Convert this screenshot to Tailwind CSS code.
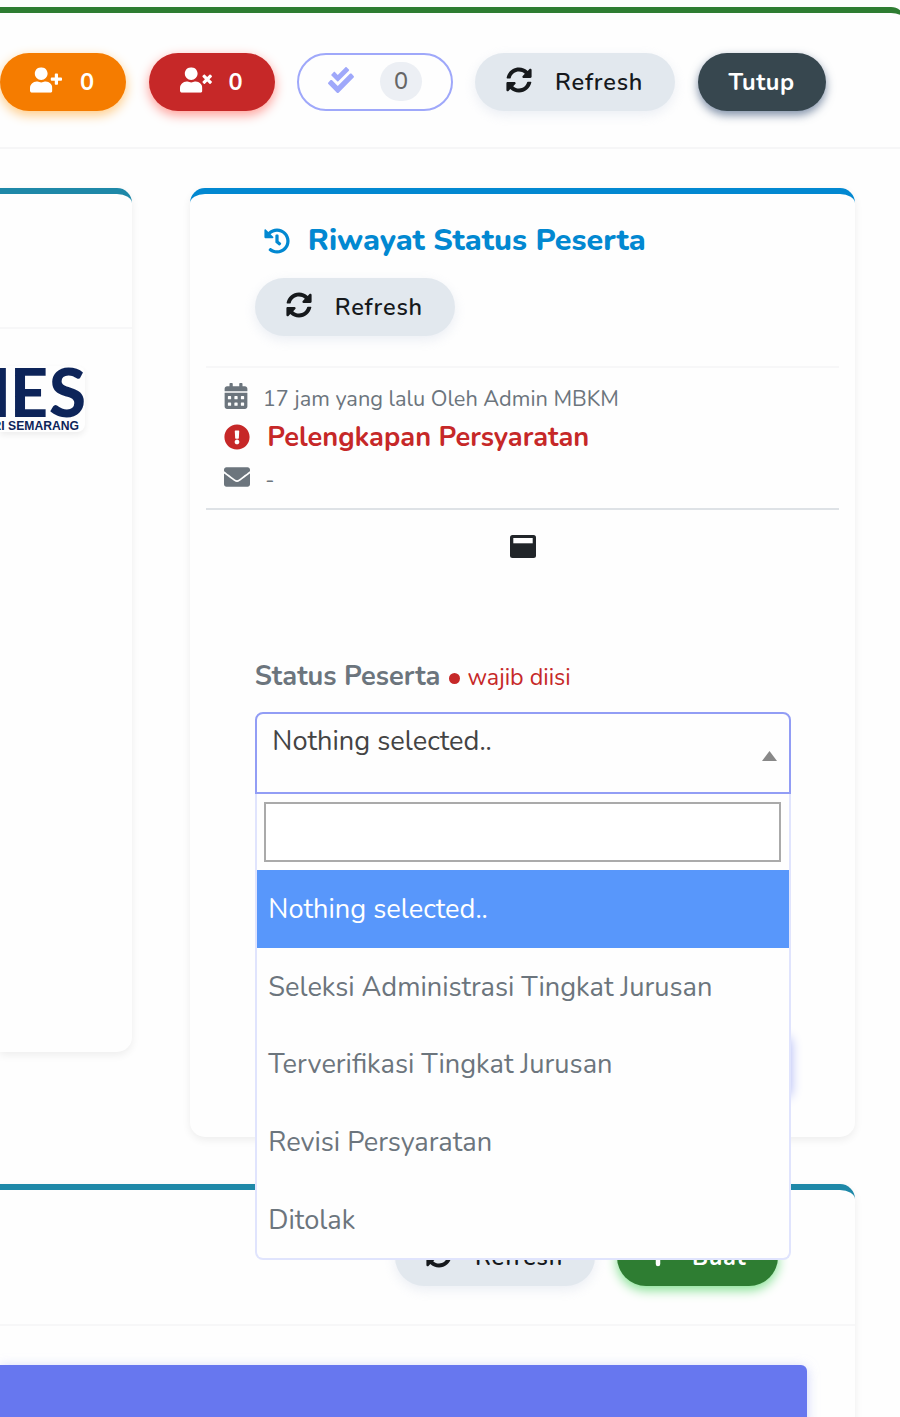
<!DOCTYPE html>
<html lang="id">
<head>
    <meta charset="UTF-8">
    <meta name="viewport" content="width=device-width, initial-scale=1.0">
    <title>Riwayat Status Peserta</title>
    <script src="https://cdn.jsdelivr.net/npm/@tailwindcss/browser@4"></script>
</head>
<body class="w-[900px] h-[1417px] overflow-hidden bg-[#fefefe] pt-[7px] font-[Nunito,Lato,sans-serif] text-[#6c757d]">
    <!-- icons -->
    <svg class="hidden">
        <symbol id="sync" viewBox="0 0 512 512"><path d="M370.72 133.28C339.458 104.008 298.888 87.962 255.848 88c-77.458.068-144.328 53.178-162.791 126.85-1.344 5.363-6.122 9.15-11.651 9.15H24.103c-7.498 0-13.194-6.807-11.807-14.176C33.933 94.924 134.813 8 256 8c66.448 0 126.791 26.136 171.315 68.685L463.03 40.97C478.149 25.851 504 36.559 504 57.941V192c0 13.255-10.745 24-24 24H345.941c-21.382 0-32.09-25.851-16.971-40.971l41.75-41.749zM32 296h134.059c21.382 0 32.09 25.851 16.971 40.971l-41.75 41.75c31.262 29.273 71.835 45.319 114.876 45.28 77.418-.07 144.315-53.144 162.787-126.849 1.344-5.363 6.122-9.15 11.651-9.15h57.304c7.498 0 13.194 6.807 11.807 14.176C478.067 417.076 377.187 504 256 504c-66.448 0-126.791-26.136-171.315-68.685L48.97 471.03C33.851 486.149 8 475.441 8 454.059V320c0-13.255 10.745-24 24-24z"/></symbol>
        <symbol id="user" viewBox="0 0 448 512"><path d="M224 256c70.7 0 128-57.3 128-128S294.7 0 224 0 96 57.3 96 128s57.3 128 128 128zm89.6 32h-16.7c-22.2 10.2-46.9 16-72.9 16s-50.6-5.8-72.9-16h-16.7C60.2 288 0 348.2 0 422.4V464c0 26.5 21.5 48 48 48h352c26.5 0 48-21.5 48-48v-41.6c0-74.2-60.2-134.4-134.4-134.4z"/></symbol>
    </svg>

    <div class="w-[905px] h-[1420px] rounded-tr-[14px] border-t-6 border-[#2e7d32]">
        <div class="flex h-[136px] items-start gap-[22.5px] border-b-2 border-[#f6f6f7] pt-[39.6px] text-[23.5px] leading-[58px] text-white">
            <button class="flex h-[58px] w-[126px] shrink-0 items-center rounded-full bg-[#f57c00] pl-[30px] font-bold shadow-[0_4px_12px_#ffc980]">
                <svg class="mb-1 h-[26px] w-8" viewBox="0 0 640 512" fill="currentColor"><use href="#user" width="448" height="512"/><path d="M624 208h-64v-64c0-8.800-7.200-16-16-16h-32c-8.800 0-16 7.200-16 16v64h-64c-8.800 0-16 7.200-16 16v32c0 8.800 7.200 16 16 16h64v64c0 8.800 7.200 16 16 16h32c8.800 0 16-7.200 16-16v-64h64c8.800 0 16-7.200 16-16v-32c0-8.800-7.200-16-16-16z"/></svg>
                <span class="ml-[18px]">0</span>
            </button>
            <button class="flex h-[58px] w-[126px] shrink-0 items-center rounded-full bg-[#c62828] pl-[31px] font-bold shadow-[0_4px_12px_#ff9a93]">
                <svg class="mb-1 h-[26px] w-8" viewBox="0 0 640 512" fill="currentColor"><use href="#user" width="448" height="512"/><path d="M589.600 240l45.600-45.600c6.300-6.300 6.300-16.500 0-22.800l-22.800-22.800c-6.300-6.300-16.500-6.300-22.800 0L544 194.400l-45.600-45.600c-6.300-6.300-16.500-6.300-22.800 0l-22.800 22.800c-6.300 6.300-6.300 16.500 0 22.800l45.600 45.600-45.600 45.600c-6.300 6.300-6.300 16.500 0 22.800l22.800 22.800c6.300 6.300 16.500 6.300 22.800 0l45.600-45.600 45.600 45.600c6.300 6.300 16.500 6.300 22.800 0l22.800-22.800c6.300-6.300 6.300-16.500 0-22.800L589.600 240z"/></svg>
                <span class="ml-[17px]">0</span>
            </button>
            <button class="flex h-[58px] w-[155.6px] shrink-0 items-center rounded-full border-2 border-[#9fa8fa] pl-[29px] text-[#9fa8fa]">
                <svg class="mb-1 size-[26px]" viewBox="0 0 512 512" fill="currentColor"><path d="M505 174.800l-39.600-39.600c-9.400-9.400-24.600-9.400-33.900 0L192 374.700 80.600 263.200c-9.400-9.400-24.600-9.400-33.900 0L7 302.900c-9.400 9.400-9.400 24.600 0 34L175 505c9.400 9.400 24.600 9.400 33.900 0l296-296.200c9.400-9.500 9.400-24.700.1-34zm-324.300 106c6.200 6.300 16.400 6.300 22.600 0l208-208.200c6.200-6.300 6.200-16.400 0-22.600L366.100 4.700c-6.200-6.300-16.400-6.300-22.600 0L192 156.200l-55.400-55.500c-6.200-6.300-16.400-6.300-22.600 0L68.700 146c-6.200 6.300-6.200 16.400 0 22.600l112 112.200z"/></svg>
                <span class="ml-[26px] h-[39px] w-[42px] rounded-full bg-[#eceff4] text-center font-medium leading-[39px] text-[#666]">0</span>
            </button>
            <button class="flex h-[58px] w-[200px] shrink-0 items-center rounded-full bg-[#e2e8ee] pl-[31px] font-semibold text-[#16191c] shadow-[0_4px_12px_#dfe5ef99]">
                <svg class="mb-1 size-[26px]" fill="currentColor"><use href="#sync"/></svg>
                <span class="ml-[23px] tracking-[0.8px]">Refresh</span>
            </button>
            <button class="h-[58px] w-[128px] shrink-0 rounded-full bg-[#37474f] font-bold tracking-[0.6px] shadow-[0_4px_10px_#5d7290cc]">Tutup</button>
        </div>

        <div class="flex items-start gap-[58.3px] pt-[39px]">
            <div class="h-[864px] w-[132px] rounded-r-[15px] border-t-6 border-[#1e88a8] shadow-[0_3px_8px_#00000012]">
                <div class="h-[135px] border-b-2 border-[#f7f7f8]"></div>
                <!-- logo -->
                <svg class="mt-[37px] h-[66px] w-[85px] rounded-r-lg shadow-[0_3px_6px_#00000012]" viewBox="0 0 85 66" fill="#0d2459" font-family="Lato, sans-serif" font-weight="900">
                    <text x="-41" y="51" font-size="67" textLength="52" lengthAdjust="spacingAndGlyphs">N</text>
                    <text x="10" y="51" font-size="67" textLength="38" lengthAdjust="spacingAndGlyphs">E</text>
                    <text x="49" y="51" font-size="67" textLength="37" lengthAdjust="spacingAndGlyphs">S</text>
                    <text x="-126" y="64" font-size="13.500" font-family="Liberation Sans" font-weight="700" textLength="205" lengthAdjust="spacingAndGlyphs">UNIVERSITAS NEGERI SEMARANG</text>
                </svg>
            </div>

            <div class="relative h-[949px] w-[665px] rounded-[15px] border-t-6 border-[#0288d1] px-4 shadow-[0_3px_8px_#00000012]">
                <div class="h-[174px] border-b-2 border-[#f7f7f8] pl-[48.500px] pt-[26px]">
                    <h4 class="flex h-[42px] items-center pl-[9px] text-[30.4px] font-extrabold text-[#0288d1]">
                        <svg class="size-[26px]" viewBox="0 0 512 512" fill="currentColor"><path d="M504 255.531c.253 136.640-111.180 248.372-247.820 248.468-59.015.042-113.223-20.530-155.822-54.911-11.077-8.940-11.905-25.541-1.839-35.607l11.267-11.267c8.609-8.609 22.353-9.551 31.891-1.984C173.062 425.135 212.781 440 256 440c101.705 0 184-82.311 184-184 0-101.705-82.311-184-184-184-48.814 0-93.149 18.969-126.068 49.932l50.754 50.754c10.080 10.080 2.941 27.314-11.313 27.314H24c-8.837 0-16-7.163-16-16V38.627c0-14.254 17.234-21.393 27.314-11.314l49.372 49.372C129.209 34.136 189.552 8 256 8c136.810 0 247.747 110.780 248 247.531zm-180.912 78.784l9.823-12.630c8.138-10.463 6.253-25.542-4.210-33.679L288 256.349V152c0-13.255-10.745-24-24-24h-16c-13.255 0-24 10.745-24 24v135.651l65.409 50.874c10.463 8.137 25.541 6.253 33.679-4.210z"/></svg>
                        <span class="ml-[18px] whitespace-nowrap">Riwayat Status Peserta</span>
                    </h4>
                    <button class="mt-4 flex h-[58px] w-[200px] items-center rounded-full bg-[#e2e8ee] pl-[31px] text-[23.5px] font-semibold text-[#16191c] shadow-[0_4px_12px_#dfe5ef99]">
                        <svg class="mb-1 size-[26px]" fill="currentColor"><use href="#sync"/></svg>
                        <span class="ml-[23px] mt-px tracking-[0.8px]">Refresh</span>
                    </button>
                </div>

                <div class="h-[142px] border-b-2 border-[#dee2e6] pl-[18px] pt-[10px]">
                    <div class="flex h-10 items-center text-[21.76px]">
                        <svg class="mb-1 h-[26px] w-6" viewBox="0 0 448 512" fill="currentColor"><path d="M0 464c0 26.500 21.500 48 48 48h352c26.500 0 48-21.500 48-48V192H0v272zm320-196c0-6.600 5.400-12 12-12h40c6.600 0 12 5.400 12 12v40c0 6.600-5.400 12-12 12h-40c-6.600 0-12-5.400-12-12v-40zm0 128c0-6.600 5.400-12 12-12h40c6.600 0 12 5.400 12 12v40c0 6.600-5.400 12-12 12h-40c-6.600 0-12-5.400-12-12v-40zM192 268c0-6.600 5.400-12 12-12h40c6.600 0 12 5.400 12 12v40c0 6.600-5.400 12-12 12h-40c-6.600 0-12-5.400-12-12v-40zm0 128c0-6.600 5.400-12 12-12h40c6.600 0 12 5.400 12 12v40c0 6.600-5.400 12-12 12h-40c-6.600 0-12-5.400-12-12v-40zM64 268c0-6.600 5.400-12 12-12h40c6.600 0 12 5.400 12 12v40c0 6.600-5.400 12-12 12H76c-6.600 0-12-5.400-12-12v-40zm0 128c0-6.600 5.400-12 12-12h40c6.600 0 12 5.400 12 12v40c0 6.600-5.400 12-12 12H76c-6.600 0-12-5.400-12-12v-40zM400 64h-48V16c0-8.800-7.200-16-16-16h-32c-8.800 0-16 7.200-16 16v48H160V16c0-8.800-7.200-16-16-16h-32c-8.800 0-16 7.200-16 16v48H48C21.500 64 0 85.500 0 112v48h448v-48c0-26.500-21.500-48-48-48z"/></svg>
                        <span class="ml-[14.5px] mt-0.5">17 jam yang lalu Oleh Admin MBKM</span>
                    </div>
                    <div class="-mt-px flex h-10 items-center text-[27.2px] font-bold text-[#c62828]">
                        <svg class="size-[26px]" viewBox="0 0 512 512" fill="currentColor"><path d="M504 256c0 136.997-111.043 248-248 248S8 392.997 8 256C8 119.083 119.043 8 256 8s248 111.083 248 248zm-248 50c-25.405 0-46 20.595-46 46s20.595 46 46 46 46-20.595 46-46-20.595-46-46-46zm-43.673-165.346l7.418 136c.347 6.364 5.609 11.346 11.982 11.346h48.546c6.373 0 11.635-4.982 11.982-11.346l7.418-136c.375-6.874-5.098-12.654-11.982-12.654h-63.383c-6.884 0-12.356 5.780-11.981 12.654z"/></svg>
                        <span class="ml-[17px] mt-0.5">Pelengkapan Persyaratan</span>
                    </div>
                    <div class="flex h-10 items-center text-[21.76px]">
                        <svg class="size-[26px]" viewBox="0 0 512 512" fill="currentColor"><path d="M502.300 190.800c3.900-3.100 9.700-.2 9.700 4.700V400c0 26.500-21.500 48-48 48H48c-26.500 0-48-21.500-48-48V195.600c0-5 5.700-7.800 9.700-4.700 22.400 17.400 52.100 39.500 154.100 113.600 21.100 15.400 56.700 47.800 92.200 47.600 35.700.3 72-32.800 92.300-47.600 102-74.100 131.600-96.300 154-113.700zM256 320c23.200.4 56.600-29.200 73.400-41.400 132.700-96.300 142.800-104.700 173.400-128.700 5.800-4.500 9.200-11.500 9.200-18.900v-19c0-26.500-21.500-48-48-48H48c-26.500 0-48 21.500-48 48v19c0 7.400 3.400 14.300 9.200 18.900 30.600 23.900 40.700 32.400 173.400 128.700 16.800 12.200 50.200 41.800 73.400 41.400z"/></svg>
                        <span class="ml-[15px] mt-1.5">-</span>
                    </div>
                </div>

                <div class="flex justify-center pt-[25px]">
                    <svg class="h-[23px] w-[26px]" viewBox="0 0 26 23"><rect width="26" height="23" rx="2.500" fill="#212529"/><rect x="3.300" y="3" width="19.400" height="5.300" fill="#fff"/></svg>
                </div>

                <div class="pl-[48.500px] pr-[48.500px]">
                    <label class="mt-[98px] flex h-10 items-center text-[27.2px] font-bold"><span class="mt-0.5">Status Peserta</span>
                        <span class="ml-[9px] mt-1 size-[11px] rounded-full bg-[#c62828]"></span>
                        <span class="ml-[7px] mt-0.5 text-[23.3px] font-normal text-[#c62828]">wajib diisi</span>
                    </label>
                    <div class="relative mt-4 h-[82px] w-[536px] rounded-t-lg border-2 border-[#929df5] pl-[15.5px] pt-2 text-[27.2px] leading-10 text-[#444]">
                        Nothing selected..
                        <svg class="absolute right-3 top-[37px] h-[10px] w-[15px]" viewBox="0 0 15 10"><path d="M0 10L7.500 0L15 10z" fill="#888"/></svg>
                        <!-- open list -->
                        <div class="absolute -left-[2px] top-[80px] z-10 w-[536px] rounded-b-lg border-x-2 border-b-2 border-[#e0e4fd] bg-[#fefefe] text-[27.2px] text-[#6c757d]">
                            <div class="px-[7.5px] py-2"><input type="text" class="block h-[60px] w-full border-2 border-[#aaa] bg-white"></div>
                            <ul class="leading-[77.7px]">
                                <li class="h-[77.7px] bg-[#5897fb] pl-[11.5px] pt-px text-white">Nothing selected..</li>
                                <li class="h-[77.7px] pl-[11.5px] pt-px">Seleksi Administrasi Tingkat Jurusan</li>
                                <li class="h-[77.7px] pl-[11.5px] pt-px">Terverifikasi Tingkat Jurusan</li>
                                <li class="h-[77.7px] pl-[11.5px] pt-px">Revisi Persyaratan</li>
                                <li class="h-[77.2px] pl-[11.5px] pt-px">Ditolak</li>
                            </ul>
                        </div>
                    </div>
                    <div class="mt-[241px] ml-auto h-[60px] w-[160px] rounded-md bg-[#6777ef] shadow-[0_2px_12px_#acb5f6]"></div>
                </div>
            </div>
        </div>

        <div class="mt-[47px] h-[240px] w-[855px] rounded-tr-[15px] border-t-6 border-[#1e88a8] shadow-[0_3px_8px_#00000012]">
            <div class="flex h-[136px] justify-end gap-[22px] border-b-2 border-[#f7f7f8] pr-[77px] pt-[38px] text-[23.5px]">
                <button class="flex h-[58px] w-[200px] items-center rounded-full bg-[#e2e8ee] pl-[31px] font-semibold text-[#16191c] shadow-[0_4px_12px_#dfe5ef99]">
                    <svg class="mb-1 size-[26px]" fill="currentColor"><use href="#sync"/></svg>
                    <span class="ml-[23px] mt-px tracking-[0.8px]">Refresh</span>
                </button>
                <button class="flex h-[58px] w-[161px] items-center rounded-full bg-[#2e7d32] pl-[29px] font-bold text-white shadow-[0_4px_12px_#81e08f]">
                    <svg class="size-6" viewBox="0 0 24 24" stroke="currentColor" stroke-width="4.500" stroke-linecap="round"><path d="M12 3v16M3 11h18"/></svg>
                    <span class="ml-[22px] mt-px tracking-[0.6px]">Buat</span>
                </button>
            </div>
            <div class="mt-[39px] h-[60px] w-[807px] rounded-tr-md bg-[#6777ef] shadow-[0_2px_12px_#acb5f699]"></div>
        </div>
    </div>
</body>
</html>
